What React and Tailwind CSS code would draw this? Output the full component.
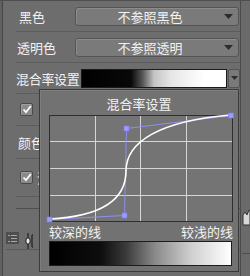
import React from "react";

const font = { fontFamily: '"Noto Sans CJK SC", "Noto Sans", sans-serif' };

function Arrow() {
  return (
    <svg width="9" height="5" viewBox="0 0 9 5" className="block">
      <path d="M0 0 H9 L4.5 5 Z" fill="#2c2c2c" />
    </svg>
  );
}

function Dropdown({ text }) {
  return (
    <div className="flex h-[19px] w-[164px] items-center rounded-[3px] border border-[#545454] bg-[#7a7a7a] shadow-[inset_1px_1px_0_#8c8c8c]">
      <div className="flex-1 pl-[2px] text-center text-[13px] leading-none text-[#f2f2f2]">{text}</div>
      <div className="flex w-[16px] items-center justify-center pr-[3px]">
        <Arrow />
      </div>
    </div>
  );
}

function Checkbox() {
  return (
    <div className="flex h-[13px] w-[13px] items-center justify-center rounded-[2px] border border-[#4a4a4a] bg-[#8a8a8a] shadow-[inset_1px_1px_0_#a0a0a0]">
      <svg width="10" height="9" viewBox="0 0 10 9">
        <path d="M1.5 4.5 L4 7.2 L8.8 1" fill="none" stroke="#ffffff" strokeWidth="1.8" />
      </svg>
    </div>
  );
}

function Graph() {
  const purple = "#8f8ff0";
  const sq = (x, y) => <rect x={x - 2.5} y={y - 2.5} width="5" height="5" fill="#9c9cff" stroke="#7b7bf0" strokeWidth="0.6" />;
  return (
    <div className="relative ml-[9px] h-[107px] w-[184px] border border-[#2f2f2f] bg-[#747474]">
      <svg width="184" height="107" viewBox="0 0 184 107" className="absolute left-[-1px] top-[-1px] overflow-visible">
        <g stroke="#d6d6d6" strokeWidth="1">
          <line x1="46.5" y1="1" x2="46.5" y2="106" />
          <line x1="91.5" y1="1" x2="91.5" y2="106" />
          <line x1="137.5" y1="1" x2="137.5" y2="106" />
          <line x1="1" y1="26.5" x2="183" y2="26.5" />
          <line x1="1" y1="53.5" x2="183" y2="53.5" />
          <line x1="1" y1="80.5" x2="183" y2="80.5" />
        </g>
        <path d="M0.5 104.5 L75.5 100.5 L77.5 13.5 L182.5 0.5" fill="none" stroke={purple} strokeWidth="1" />
        <path d="M0.5 104 C40 102 77 92 77 56 C77 27 110 6 182 0" fill="none" stroke="#ffffff" strokeWidth="1.6" />
        {sq(0.5, 104.5)}
        {sq(75.5, 100.5)}
        {sq(77.5, 13.5)}
        {sq(182, 0.5)}
      </svg>
    </div>
  );
}

export default function App() {
  return (
    <div className="relative flex h-[276px] w-[250px] overflow-hidden border-t border-[#4e4e4e] bg-[#6d6d6d] text-[#f2f2f2]" style={font}>
      {/* left edge */}
      <div className="w-[3px] border-r border-[#474747] bg-[#616161]" />

      {/* main column */}
      <div className="flex flex-1 flex-col pl-[13px]">
        <div className="flex h-[31px] items-center border-b border-[#5c5c5c]">
          <div className="w-[59px] pl-[3px] text-[13px] leading-none">黑色</div>
          <Dropdown text="不参照黑色" />
        </div>
        <div className="flex h-[31px] items-center border-b border-[#5c5c5c]">
          <div className="w-[59px] pl-[1px] text-[13px] leading-none">透明色</div>
          <Dropdown text="不参照透明" />
        </div>
        <div className="flex h-[31px] items-center border-b border-[#5c5c5c]">
          <div className="w-[65px] text-[13px] leading-none tracking-[-0.3px]">混合率设置</div>
          <div className="h-[19px] w-[146px] border border-[#1a1a1a] bg-[linear-gradient(to_right,#000_0%,#080808_34%,#555_42%,#c4c4c4_50%,#e6e6e6_62%,#fff_85%)]" />
          <div className="ml-[1px] flex h-[19px] w-[12px] items-center justify-center rounded-[2px] border border-[#545454] bg-[#7a7a7a]">
            <svg width="7" height="4" viewBox="0 0 7 4"><path d="M0 0 H7 L3.5 4 Z" fill="#2c2c2c" /></svg>
          </div>
        </div>
        <div className="flex h-[32px] items-center gap-[4px] border-b border-[#5c5c5c] pl-[4px]">
          <Checkbox />
        </div>
        <div className="flex h-[33px] items-center border-b border-[#5c5c5c] pl-[2px] text-[13px] leading-none">颜色</div>
        <div className="flex h-[38px] items-start gap-[4px] border-b border-[#5c5c5c] pl-[4px] pt-[12px]">
          <Checkbox />
          <span className="text-[13px] leading-none">注释</span>
        </div>
        <div className="h-[12px] border-b border-[#4f4f4f]" />
        <div className="h-[23px]" />
        <div className="ml-[-10px] flex h-[18px] items-start gap-[6px] border-b border-[#5a5a5a]">
          <div className="flex h-[12px] w-[13px] items-center justify-center bg-[#4e4e4e]">
            <svg width="9" height="7" viewBox="0 0 9 7">
              <g stroke="#a8a8a8" strokeWidth="1">
                <line x1="0" y1="0.5" x2="2" y2="0.5" />
                <line x1="3" y1="0.5" x2="9" y2="0.5" />
                <line x1="3" y1="3.5" x2="9" y2="3.5" />
                <line x1="0" y1="6.5" x2="2" y2="6.5" />
                <line x1="3" y1="6.5" x2="9" y2="6.5" />
              </g>
            </svg>
          </div>
          <svg width="12" height="18" viewBox="0 0 12 18">
            <path d="M3 1 V17" stroke="#111" strokeWidth="1" />
            <ellipse cx="3" cy="9" rx="2.2" ry="3.2" fill="#e6e6e6" stroke="#111" strokeWidth="1" />
            <path d="M8 3 H7 V15 H8" fill="none" stroke="#111" strokeWidth="1" />
          </svg>
        </div>
      </div>

      {/* right strip */}
      <div className="flex w-[10px] flex-col border-l border-[#4a4a4a] bg-[#6a6a6a] pl-[1px]">
        <div className="h-[206px]" />
        <svg width="8" height="20" viewBox="0 0 8 20">
          <path d="M1 18 L1 8 L3 5 L5 8 L7 3 L8 3 L8 18 Z" fill="#d8d8d8" stroke="#333" strokeWidth="1" />
        </svg>
        <div className="mt-[26px] border-t border-[#4e4e4e]" />
      </div>

      {/* popup */}
      <div className="absolute left-[39px] top-[88px] flex h-[183px] w-[200px] flex-col border border-[#3b3b3b] bg-[#727272] shadow-[inset_1px_1px_0_#7e7e7e]">
        <div className="flex h-[25px] items-center justify-center pt-[1px] text-[13px] leading-none">混合率设置</div>
        <Graph />
        <div className="flex h-[19px] w-[193px] items-center justify-between pl-[9px] text-[13px] leading-none">
          <span>较深的线</span>
          <span>较浅的线</span>
        </div>
        <div className="ml-[9px] h-[25px] w-[183px] border border-[#1c1c1c] bg-[linear-gradient(to_right,#000_0%,#0d0d0d_28%,#3a3a3a_42%,#8a8a8a_58%,#cfcfcf_78%,#fff_100%)]" />
      </div>
    </div>
  );
}
